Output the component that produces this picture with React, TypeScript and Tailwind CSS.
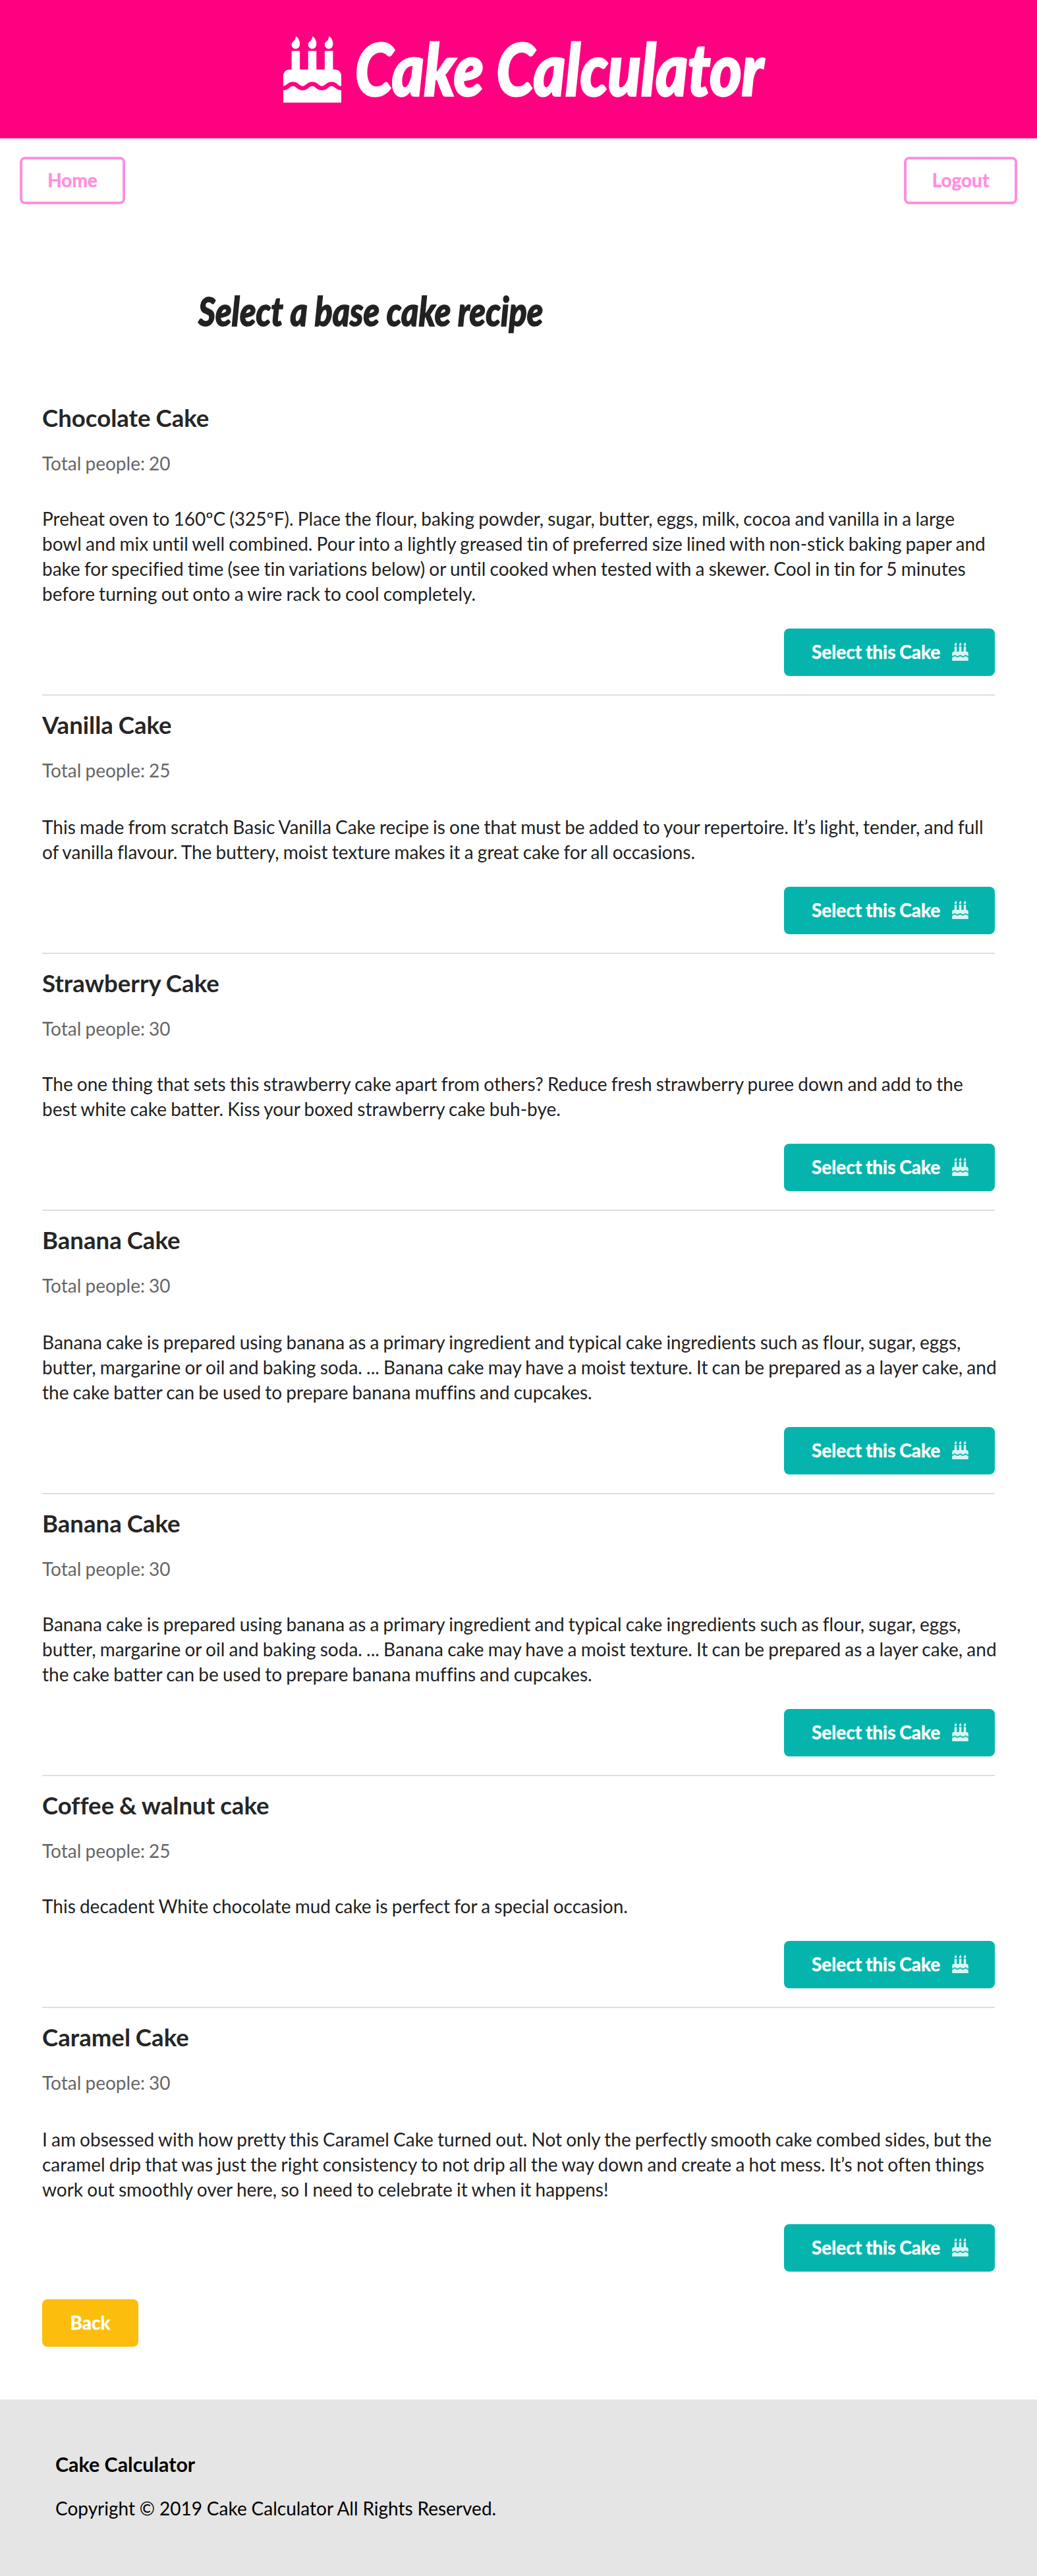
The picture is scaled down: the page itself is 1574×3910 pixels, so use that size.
import { FaBirthdayCake } from "react-icons/fa";

type Cake = { name: string; people: number; gap: string; lines: string[] };

const bananaLines = [
  "Banana cake is prepared using banana as a primary ingredient and typical cake ingredients such as flour, sugar, eggs,",
  "butter, margarine or oil and baking soda. ... Banana cake may have a moist texture. It can be prepared as a layer cake, and",
  "the cake batter can be used to prepare banana muffins and cupcakes.",
];

const cakes: Cake[] = [
  {
    name: "Chocolate Cake",
    people: 20,
    gap: "mt-[45px]",
    lines: [
      "Preheat oven to 160ºC (325ºF). Place the flour, baking powder, sugar, butter, eggs, milk, cocoa and vanilla in a large",
      "bowl and mix until well combined. Pour into a lightly greased tin of preferred size lined with non-stick baking paper and",
      "bake for specified time (see tin variations below) or until cooked when tested with a skewer. Cool in tin for 5 minutes",
      "before turning out onto a wire rack to cool completely.",
    ],
  },
  {
    name: "Vanilla Cake",
    people: 25,
    gap: "mt-[47px]",
    lines: [
      "This made from scratch Basic Vanilla Cake recipe is one that must be added to your repertoire. It’s light, tender, and full",
      "of vanilla flavour. The buttery, moist texture makes it a great cake for all occasions.",
    ],
  },
  {
    name: "Strawberry Cake",
    people: 30,
    gap: "mt-[45px]",
    lines: [
      "The one thing that sets this strawberry cake apart from others? Reduce fresh strawberry puree down and add to the",
      "best white cake batter. Kiss your boxed strawberry cake buh-bye.",
    ],
  },
  { name: "Banana Cake", people: 30, gap: "mt-[47px]", lines: bananaLines },
  { name: "Banana Cake", people: 30, gap: "mt-[45px]", lines: bananaLines },
  {
    name: "Coffee & walnut cake",
    people: 25,
    gap: "mt-[45px]",
    lines: ["This decadent White chocolate mud cake is perfect for a special occasion."],
  },
  {
    name: "Caramel Cake",
    people: 30,
    gap: "mt-[47px]",
    lines: [
      "I am obsessed with how pretty this Caramel Cake turned out. Not only the perfectly smooth cake combed sides, but the",
      "caramel drip that was just the right consistency to not drip all the way down and create a hot mess. It’s not often things",
      "work out smoothly over here, so I need to celebrate it when it happens!",
    ],
  },
];

function CakeItem({ cake, first }: { cake: Cake; first: boolean }) {
  return (
    <article className={first ? "" : "mt-7 border-t-2 border-[#dedede] pt-[26px]"}>
      <h2 className="text-[36.6px] leading-9 font-bold text-[#262626] [word-spacing:-1px]">{cake.name}</h2>
      <p className="mt-[31px] leading-10 text-[#666666] [word-spacing:-1px]">Total people: {cake.people}</p>
      <p className={`${cake.gap} leading-[38px] whitespace-nowrap text-[#1f1f1f] [word-spacing:-1px]`}>
        {cake.lines.map((line) => (
          <span key={line} className="block">
            {line}
          </span>
        ))}
      </p>
      <div className="mt-[34px] flex justify-end">
        <button className="flex h-[72px] w-80 items-center rounded-lg bg-[#05b5ad] pl-[42px] font-bold text-white">
          <span className="w-[197px] pb-0.5 text-left whitespace-nowrap [-webkit-text-stroke:0.5px_white] [word-spacing:-1px]">
            Select this Cake
          </span>
          <FaBirthdayCake className="ml-4 h-7 w-[25px] -translate-y-px opacity-85" />
        </button>
      </div>
    </article>
  );
}

export default function App() {
  return (
    <div className="flex h-[3910px] w-[1574px] flex-col bg-white font-['Lato',sans-serif] text-[28px] [font-variant-ligatures:none]">
      <header className="flex h-[210px] items-center bg-[#ff0080] pl-[430px] text-white">
        <FaBirthdayCake className="h-[101px] w-[88px]" />
        <h1 className="ml-[21px] w-[622px] origin-left scale-x-[0.855] pb-[5px] text-[108px] leading-[130px] font-black whitespace-nowrap italic [-webkit-text-stroke:3px_white]">
          Cake Calculator
        </h1>
      </header>

      <nav className="mt-7 flex justify-between px-[30px] font-bold text-[#ff8edf]">
        <button className="h-[72px] w-40 rounded-lg border-4 border-[#ff8edf] pb-0.5 [-webkit-text-stroke:0.5px_#ff8edf]">
          Home
        </button>
        <button className="h-[72px] w-[172px] rounded-lg border-4 border-[#ff8edf] pb-0.5 [-webkit-text-stroke:0.5px_#ff8edf]">
          Logout
        </button>
      </nav>

      <main className="px-16">
        <h2 className="mt-[126px] ml-[237px] h-[72px] origin-left scale-x-[0.836] text-[60px] leading-[72px] font-black whitespace-nowrap text-[#222222] italic [-webkit-text-stroke:1.5px_#222222]">
          Select a base cake recipe
        </h2>
        <div className="mt-[108px]">
          {cakes.map((cake, i) => (
            <CakeItem key={i} cake={cake} first={i === 0} />
          ))}
        </div>
        <button className="mt-[42px] h-[72px] w-[146px] rounded-lg bg-[#fcbd0c] pb-0.5 font-bold text-white [-webkit-text-stroke:0.5px_white]">
          Back
        </button>
      </main>

      <footer className="mt-auto h-[268px] bg-[#e5e5e5] px-[84px] pt-[78px] text-black">
        <p className="text-[30.4px] leading-10 font-bold">Cake Calculator</p>
        <p className="mt-[27px] leading-10 [word-spacing:-0.3px]">Copyright © 2019 Cake Calculator All Rights Reserved.</p>
      </footer>
    </div>
  );
}
